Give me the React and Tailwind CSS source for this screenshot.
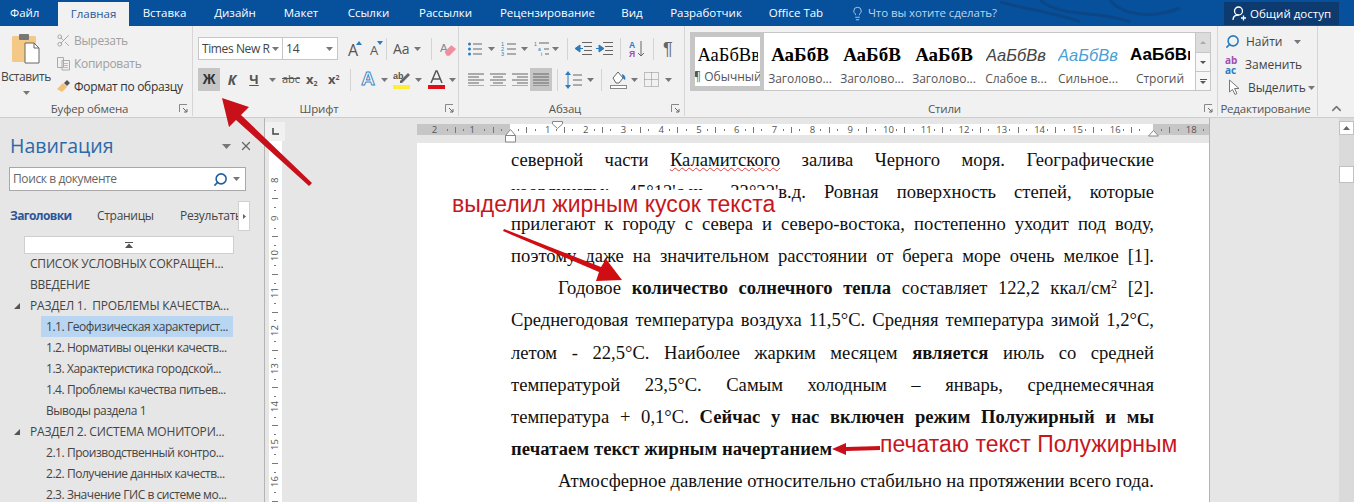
import { Scissors, Search, X, ChevronUp, Lightbulb } from 'lucide-react'

const uiFont = "font-['Open_Sans','Noto_Sans',sans-serif]"

const tabs = [
  { label: 'Вставка', w: 'w-[71px]' },
  { label: 'Дизайн', w: 'w-[70px]' },
  { label: 'Макет', w: 'w-[62px]' },
  { label: 'Ссылки', w: 'w-[73px]' },
  { label: 'Рассылки', w: 'w-[81px]' },
  { label: 'Рецензирование', w: 'w-[123px]' },
  { label: 'Вид', w: 'w-[46px]' },
  { label: 'Разработчик', w: 'w-[102px]' },
  { label: 'Office Tab', w: 'w-[78px]' },
]

const styles = [
  { sample: 'АаБбВвГг', label: '¶ Обычный', cls: "font-['Liberation_Serif',serif] text-[18.500px] text-black max-w-[60px]", selected: true },
  { sample: 'АаБбВ', label: 'Заголово...', cls: "font-['Liberation_Serif',serif] text-[19px] font-bold text-black" },
  { sample: 'АаБбВ', label: 'Заголово...', cls: "font-['Liberation_Serif',serif] text-[19px] font-bold text-black" },
  { sample: 'АаБбВ', label: 'Заголово...', cls: "font-['Liberation_Serif',serif] text-[19px] font-bold text-black" },
  { sample: 'АаБбВв', label: 'Слабое в...', cls: "font-['Liberation_Sans',sans-serif] text-[16.500px] italic text-[#444]" },
  { sample: 'АаБбВв', label: 'Сильное...', cls: "font-['Liberation_Sans',sans-serif] text-[16.500px] italic text-[#4a9fd6]" },
  { sample: 'АаБбВвГ', label: 'Строгий', cls: "font-['Liberation_Sans',sans-serif] text-[17px] font-bold text-black max-w-[60px]" },
]

const navItems = [
  { text: 'СПИСОК УСЛОВНЫХ СОКРАЩЕН...', level: 1 },
  { text: 'ВВЕДЕНИЕ', level: 1 },
  { text: 'РАЗДЕЛ 1.  ПРОБЛЕМЫ КАЧЕСТВА...', level: 1, open: true },
  { text: '1.1. Геофизическая характерист...', level: 2, active: true },
  { text: '1.2. Нормативы оценки качеств...', level: 2 },
  { text: '1.3. Характеристика городской...', level: 2 },
  { text: '1.4. Проблемы качества питьев...', level: 2 },
  { text: 'Выводы раздела 1', level: 2 },
  { text: 'РАЗДЕЛ 2. СИСТЕМА МОНИТОРИ...', level: 1, open: true },
  { text: '2.1. Производственный контро...', level: 2 },
  { text: '2.2. Получение данных качеств...', level: 2 },
  { text: '2.3. Значение ГИС в системе мо...', level: 2 },
]

function Caret({ className = '' }) {
  return (
    <svg width="7" height="4" viewBox="0 0 7 4" className={`shrink-0 ${className}`}>
      <path d="M0 0h7L3.5 4z" fill="#777" />
    </svg>
  )
}

function Sep({ className = '' }) {
  return <i className={`block w-px h-[22px] bg-[#d4d4d4] shrink-0 ${className}`} />
}

function Launcher() {
  return (
    <svg width="9" height="9" viewBox="0 0 9 9" className="shrink-0">
      <path d="M.5 8V.5H8" fill="none" stroke="#888" />
      <path d="M4 4l4 4M8 5v3H5" fill="none" stroke="#666" />
    </svg>
  )
}

function Lines({ rows }) {
  return (
    <svg width="16" height="13" viewBox="0 0 16 13" className="shrink-0">
      {rows.map((r, i) => (
        <rect key={i} x={r[0]} y={i * 3 + 0.5} width={r[1]} height="1" fill="#666" />
      ))}
    </svg>
  )
}

function Group({ width, label, launcher, children }) {
  return (
    <div className={`${width} shrink-0 flex flex-col border-r border-[#d6d6d6] mb-[1px]`}>
      <div className="flex-1 min-h-0">{children}</div>
      <div className="h-[15px] flex items-center pr-[4px]">
        <span className="flex-1 text-center text-[11.500px] tracking-[-0.2px] text-[#555] whitespace-nowrap">{label}</span>
        {launcher && <Launcher />}
      </div>
    </div>
  )
}

function ClipboardGroup() {
  return (
    <Group width="w-[193px]" label="Буфер обмена" launcher>
      <div className="flex pt-[3px]">
        <div className="w-[52px] flex flex-col items-center shrink-0">
          <svg width="32" height="32" viewBox="0 0 32 32" className="mt-[4px]">
            <rect x="2" y="3" width="24" height="26" rx="1.5" fill="#f4c988" />
            <rect x="9" y="1" width="10" height="6" rx="1" fill="#777" />
            <path d="M15 10h9l5 5v15H15z" fill="#fff" stroke="#666" />
            <path d="M24 10v5h5" fill="none" stroke="#666" />
          </svg>
          <span className="text-[12px] tracking-[-0.4px] leading-[14px] mt-[5px] text-[#444]">Вставить</span>
          <Caret className="mt-[7px]" />
        </div>
        <div className="flex flex-col pl-[4px] text-[12px] tracking-[-0.3px] leading-[23px]">
          <div className="flex items-center gap-[3px] text-[#a0a0a0]">
            <Scissors size={15} strokeWidth={1.6} className="text-[#a8a8a8]" />
            <span>Вырезать</span>
          </div>
          <div className="flex items-center gap-[3px] text-[#a0a0a0]">
            <svg width="15" height="15" viewBox="0 0 15 15">
              <path d="M1.5 1.5h6v10h-6zM6 4.500h7.500v9.500H6z" fill="#f1f1f1" stroke="#aaa" />
              <path d="M8 7.500h4M8 9.500h4M8 11.500h4" stroke="#bbb" />
            </svg>
            <span>Копировать</span>
          </div>
          <div className="flex items-center gap-[3px] text-[#333]">
            <svg width="15" height="15" viewBox="0 0 15 15">
              <path d="M1 10l6-6 4 4-5 5z" fill="#f2c079" />
              <path d="M8 4l3-3 3 3-3 3z" fill="#555" />
            </svg>
            <span>Формат по образцу</span>
          </div>
        </div>
      </div>
    </Group>
  )
}

function GrowA({ up, size }) {
  return (
    <span className="relative w-[18px] h-[20px] flex items-end justify-center shrink-0">
      <span className={`${size} leading-[18px] text-[#555]`}>A</span>
      <svg width="6" height="4" viewBox="0 0 6 4" className="absolute right-0 top-[2px]">
        <path d={up ? 'M0 4h6L3 0z' : 'M0 0h6L3 4z'} fill="#2b7cbf" />
      </svg>
    </span>
  )
}

function FontGroup() {
  return (
    <Group width="w-[266px]" label="Шрифт" launcher>
      <div className="pl-[5px] pt-[11px]">
        <div className="flex items-center h-[23px]">
          <div className="w-[140px] h-[23px] flex bg-white border border-[#c6c6c6] text-[12px] text-[#444] shrink-0">
            <div className="w-[84px] flex items-center justify-between pl-[3px] pr-[3px] border-r border-[#c6c6c6]">
              <span className="whitespace-nowrap tracking-[-0.4px]">Times New R</span>
              <Caret />
            </div>
            <div className="flex-1 flex items-center justify-between px-[3px] pr-[4px]">
              <span>14</span>
              <Caret />
            </div>
          </div>
          <span className="ml-[6px] flex gap-[3px]">
            <GrowA up size="text-[16px]" />
            <GrowA size="text-[13px]" />
          </span>
          <Sep className="ml-[3px]" />
          <span className="ml-[6px] text-[14px] text-[#555] w-[20px]">Aa</span>
          <Caret className="ml-[2px]" />
          <Sep className="ml-[10px]" />
          <svg width="20" height="18" viewBox="0 0 20 18" className="ml-[7px]">
            <text x="1" y="12" fontSize="12" fill="#888" fontFamily="Liberation Sans">A</text>
            <path d="M6 12l7-7 5 4-7 7H8z" fill="#ee8f9c" />
          </svg>
        </div>
        <div className="flex items-center h-[23px] mt-[8px] text-[13px] text-[#555] font-bold">
          <span className="w-[22px] h-[23px] bg-[#c6c6c6] flex items-center justify-center text-[#333] font-['Liberation_Sans',sans-serif] text-[14px]">Ж</span>
          <span className="w-[20px] text-center italic ml-[2px] text-[14px]">К</span>
          <span className="w-[18px] text-center underline ml-[3px]">Ч</span>
          <Caret className="ml-[6px]" />
          <span className="ml-[6px] w-[18px] text-[11px] font-normal line-through">abc</span>
          <span className="ml-[6px] w-[14px] whitespace-nowrap">x<sub className="text-[7px]">2</sub></span>
          <span className="ml-[8px] w-[14px] whitespace-nowrap">x<sup className="text-[7px]">2</sup></span>
          <Sep className="ml-[8px]" />
          <span className="ml-[8px] w-[18px] text-[19px] text-center text-white [-webkit-text-stroke:1px_#3f86c4] font-['Liberation_Sans',sans-serif]">A</span>
          <Caret className="ml-[4px]" />
          <svg width="18" height="19" viewBox="0 0 18 19" className="ml-[5px]">
            <text x="0" y="9" fontSize="9" fill="#555" fontFamily="Liberation Sans">ab</text>
            <path d="M7 11l8-8 2 2-8 8H7z" fill="#666" />
            <rect x="0" y="15" width="17" height="4" fill="#ffee33" />
          </svg>
          <Caret className="ml-[4px]" />
          <svg width="17" height="19" viewBox="0 0 17 19" className="ml-[6px]">
            <path d="M3 13L8 1h1l5 12M5 9h7" fill="none" stroke="#555" strokeWidth="1.500" />
            <rect x="0" y="15" width="17" height="4" fill="#e0101a" />
          </svg>
          <Caret className="ml-[4px]" />
        </div>
      </div>
    </Group>
  )
}

function ParagraphGroup() {
  return (
    <Group width="w-[226px]" label="Абзац" launcher>
      <div className="pl-[9px] pt-[11px]">
        <div className="flex items-center h-[23px]">
          <svg width="14" height="14" viewBox="0 0 14 14">
            <circle cx="1.500" cy="2" r="1.500" fill="#2b7cbf" />
            <circle cx="1.500" cy="7" r="1.500" fill="#2b7cbf" />
            <circle cx="1.500" cy="12" r="1.500" fill="#2b7cbf" />
            <path d="M5 2h9M5 7h9M5 12h9" stroke="#666" />
          </svg>
          <Caret className="ml-[6px]" />
          <svg width="15" height="15" viewBox="0 0 15 15" className="ml-[6px]">
            <text x="0" y="5" fontSize="5.500" fill="#2b7cbf" fontFamily="Liberation Sans">1</text>
            <text x="0" y="10" fontSize="5.500" fill="#2b7cbf" fontFamily="Liberation Sans">2</text>
            <text x="0" y="15" fontSize="5.500" fill="#2b7cbf" fontFamily="Liberation Sans">3</text>
            <path d="M6 3h9M6 8h9M6 13h9" stroke="#666" />
          </svg>
          <Caret className="ml-[5px]" />
          <svg width="16" height="15" viewBox="0 0 16 15" className="ml-[6px]">
            <text x="0" y="5" fontSize="5" fill="#2b7cbf" fontFamily="Liberation Sans">1</text>
            <text x="4" y="10" fontSize="5" fill="#2b7cbf" fontFamily="Liberation Sans">a</text>
            <text x="7" y="15" fontSize="5" fill="#666" fontFamily="Liberation Sans">i</text>
            <path d="M5 2h10M10 8h5M11 13h4" stroke="#666" />
          </svg>
          <Caret className="ml-[2px]" />
          <Sep className="ml-[8px]" />
          <svg width="17" height="13" viewBox="0 0 17 13" className="ml-[7px]">
            <path d="M7 .5h10M9 4.500h8M9 8.500h8M7 12.500h10" stroke="#666" />
            <path d="M0 6.500L5 3v7zM4 6.500h4" fill="#2b7cbf" stroke="#2b7cbf" />
          </svg>
          <svg width="17" height="13" viewBox="0 0 17 13" className="ml-[4px]">
            <path d="M7 .5h10M9 4.500h8M9 8.500h8M7 12.500h10" stroke="#666" />
            <path d="M8 6.500L3 3v7zM0 6.500h4" fill="#2b7cbf" stroke="#2b7cbf" />
          </svg>
          <Sep className="ml-[7px]" />
          <svg width="16" height="18" viewBox="0 0 16 18" className="ml-[8px]">
            <text x="0" y="8" fontSize="8.500" fontWeight="bold" fill="#2b7cbf" fontFamily="Liberation Sans">А</text>
            <text x="0" y="17" fontSize="8.500" fontWeight="bold" fill="#a24fb0" fontFamily="Liberation Sans">Я</text>
            <path d="M12 1v15M9 13l3 3 3-3" fill="none" stroke="#666" />
          </svg>
          <Sep className="ml-[8px]" />
          <span className="ml-[9px] text-[18px] leading-[20px] text-[#666] font-['Liberation_Sans',sans-serif]">¶</span>
        </div>
        <div className="flex items-center h-[23px] mt-[8px]">
          <Lines rows={[[0, 16], [0, 11], [0, 16], [0, 11], [0, 16]]} />
          <span className="ml-[6px]"><Lines rows={[[0, 16], [3, 10], [0, 16], [3, 10], [0, 16]]} /></span>
          <span className="ml-[6px]"><Lines rows={[[0, 16], [5, 11], [0, 16], [5, 11], [0, 16]]} /></span>
          <span className="ml-[2px] w-[22px] h-[23px] bg-[#c6c6c6] flex items-center justify-center">
            <Lines rows={[[0, 16], [0, 16], [0, 16], [0, 16], [0, 16]]} />
          </span>
          <Sep className="ml-[5px]" />
          <svg width="17" height="18" viewBox="0 0 17 18" className="ml-[7px]">
            <path d="M3 2v14" stroke="#2b7cbf" />
            <path d="M0 4l3-4 3 4zM0 14l3 4 3-4z" fill="#2b7cbf" />
            <path d="M8 4h9M8 9h9M8 14h9" stroke="#666" />
          </svg>
          <Caret className="ml-[5px]" />
          <Sep className="ml-[7px]" />
          <svg width="17" height="19" viewBox="0 0 17 19" className="ml-[8px]">
            <path d="M3 8l5-6 5 6-4 5H6z" fill="#fff" stroke="#666" />
            <path d="M12 4c3 1 4 4 3 6-2-1-3-3-3-6z" fill="#2b7cbf" />
            <rect x="0.500" y="15.500" width="16" height="3" fill="#fff" stroke="#888" />
          </svg>
          <Caret className="ml-[4px]" />
          <svg width="15" height="15" viewBox="0 0 15 15" className="ml-[6px]">
            <path d="M.5.5h14v14H.5zM7.500.5v14M.5 7.500h14" fill="none" stroke="#888" strokeDasharray="1 1" />
          </svg>
          <Caret className="ml-[6px]" />
        </div>
      </div>
    </Group>
  )
}

function StylesGroup() {
  return (
    <Group width="w-[533px]" label="Стили" launcher>
      <div className="flex pl-[5px] pt-[6px] pr-[6px]">
        <div className="w-[506px] h-[59px] flex bg-white border border-[#c6c6c6] overflow-hidden">
          {styles.map((s, i) => (
            <div
              key={i}
              className={`shrink-0 flex flex-col items-center overflow-hidden px-[1px] ${s.selected ? 'border-[4px] border-[#c6c6c6] w-[73px] pt-[3px]' : 'w-[72px] pt-[7px]'}`}
            >
              <span className={`h-[30px] leading-[30px] whitespace-nowrap overflow-hidden ${s.cls}`}>{s.sample}</span>
              <span className="text-[12px] leading-[18px] text-[#555] whitespace-nowrap">{s.label}</span>
            </div>
          ))}
        </div>
        <div className="w-[15px] flex flex-col border-y border-r border-[#c6c6c6]">
          <div className="h-[20px] bg-[#dcdcdc] flex items-center justify-center border-b border-[#c6c6c6]">
            <svg width="6" height="3" viewBox="0 0 6 3"><path d="M0 3h6L3 0z" fill="#aaa" /></svg>
          </div>
          <div className="h-[19px] bg-[#f7f7f7] flex items-center justify-center border-b border-[#c6c6c6]">
            <svg width="6" height="3" viewBox="0 0 6 3"><path d="M0 0h6L3 3z" fill="#555" /></svg>
          </div>
          <div className="flex-1 bg-[#f7f7f7] flex flex-col items-center justify-center gap-[1px]">
            <i className="block w-[7px] h-px bg-[#555]" />
            <svg width="6" height="3" viewBox="0 0 6 3"><path d="M0 0h6L3 3z" fill="#555" /></svg>
          </div>
        </div>
      </div>
    </Group>
  )
}

function EditingGroup() {
  return (
    <Group width="w-[100px]" label="Редактирование">
      <div className="pl-[7px] pt-[4px] text-[12px] leading-[23px] text-[#444]">
        <div className="flex items-center gap-[6px]">
          <Search size={15} strokeWidth={2.5} className="text-[#2b7cbf] -scale-x-100" />
          <span>Найти</span>
          <Caret className="ml-[6px]" />
        </div>
        <div className="flex items-center gap-[3px]">
          <span className="w-[17px] h-[20px] flex flex-col text-[10px] leading-[10px] font-bold">
            <span className="text-[#a24fb0]">ab</span>
            <span className="text-[#2b7cbf]">ac</span>
          </span>
          <span>Заменить</span>
        </div>
        <div className="flex items-center gap-[6px]">
          <svg width="15" height="17" viewBox="0 0 15 17" className="ml-[2px]">
            <path d="M2.500 1v12l3-2.500 2.500 5 2-1-2.500-5H12z" fill="#fff" stroke="#777" strokeLinejoin="round" />
          </svg>
          <span>Выделить</span>
          <Caret className="-ml-[4px]" />
        </div>
      </div>
    </Group>
  )
}

function TopBar() {
  return (
    <div className="h-[26px] bg-[#07509c] flex text-[11.500px] text-white shrink-0 relative overflow-hidden">
      <svg className="absolute left-[1000px] top-0" width="220" height="26" viewBox="0 0 220 26">
        <path d="M0 2c30 8 60 12 80 20M110 0c10 14 40 20 70 8M40 0c20 18 60 10 90 22" fill="none" stroke="#0b4787" strokeWidth="3" />
      </svg>
      <div className="w-[58px] pl-[10px] flex items-center">Файл</div>
      <div className="w-[71px] mt-[2px] bg-[#f1f1f1] text-[#2b579a] flex items-center justify-center">Главная</div>
      {tabs.map(t => (
        <div key={t.label} className={`${t.w} flex items-center justify-center shrink-0 whitespace-nowrap`}>{t.label}</div>
      ))}
      <div className="ml-[15px] flex items-center gap-[3px] text-[#bcd4ec] relative">
        <Lightbulb size={15} strokeWidth={1.4} />
        <span className="whitespace-nowrap tracking-[-0.1px]">Что вы хотите сделать?</span>
      </div>
      <div className="ml-auto mr-[15px] mt-[2px] mb-[1px] w-[115px] bg-[#0d3b70] flex items-center justify-center gap-[3px] relative">
        <svg width="15" height="15" viewBox="0 0 15 15">
          <circle cx="6.500" cy="5" r="4" fill="none" stroke="#fff" strokeWidth="1.300" />
          <path d="M1 14c0-3 2-5 5.500-5M9 12h5M11.500 9.500v5" fill="none" stroke="#fff" strokeWidth="1.300" />
        </svg>
        <span className="whitespace-nowrap">Общий доступ</span>
      </div>
    </div>
  )
}

function NavPane() {
  return (
    <div className="w-[265px] shrink-0 border-r border-[#b4b4b4] pt-[16px] text-[12px] text-[#444] overflow-hidden">
      <div className="flex items-center pl-[10px] pr-[11px] h-[24px]">
        <span className="text-[19.500px] text-[#2b6aa8] flex-1">Навигация</span>
        <svg width="9" height="5" viewBox="0 0 9 5" className="mr-[8px]"><path d="M0 0h9L4.500 5z" fill="#777" /></svg>
        <X size={14} strokeWidth={2.2} className="text-[#666]" />
      </div>
      <div className="ml-[9px] mt-[9px] w-[237px] h-[24px] bg-white border border-[#a8a8a8] flex items-center pl-[3px] pr-[5px]">
        <span className="flex-1 text-[#666] tracking-[-0.4px]">Поиск в документе</span>
        <Search size={15} strokeWidth={2.5} className="text-[#1f5f9f] -scale-x-100" />
        <Caret className="ml-[5px]" />
      </div>
      <div className="mt-[10px] h-[30px] flex items-center tracking-[-0.3px]">
        <span className="ml-[10px] w-[87px] shrink-0 font-bold text-[#2b579a] tracking-[-0.6px]">Заголовки</span>
        <span className="w-[83px] shrink-0">Страницы</span>
        <span className="w-[58px] shrink-0 overflow-hidden whitespace-nowrap">Результаты</span>
        <span className="w-[12px] h-[30px] bg-white border border-[#d0d0d0] flex items-center justify-center">
          <svg width="3" height="5" viewBox="0 0 3 5"><path d="M0 0l3 2.500L0 5z" fill="#666" /></svg>
        </span>
      </div>
      <div className="ml-[24px] mt-[5px] w-[210px] h-[18px] bg-white border border-[#cfcfcf] flex items-center justify-center">
        <svg width="8" height="6" viewBox="0 0 8 6"><path d="M0 0h8v1H0zM4 1.500L8 6H0z" fill="#555" /></svg>
      </div>
      <div className="-mt-[1px]">
        {navItems.map(item => (
          <div key={item.text} className="h-[21px] flex items-center whitespace-pre">
            <span className="w-[14px] ml-[14px] shrink-0">
              {item.open && <svg width="6" height="6" viewBox="0 0 6 6"><path d="M6 0v6H0z" fill="#555" /></svg>}
            </span>
            {item.level === 1 ? (
              <span className="ml-[2px] tracking-[-0.2px]">{item.text}</span>
            ) : (
              <span className={`ml-[13px] w-[192px] h-[21px] leading-[21px] pl-[5px] tracking-[-0.45px] ${item.active ? 'bg-[#b8d6f2]' : ''}`}>{item.text}</span>
            )}
          </div>
        ))}
      </div>
    </div>
  )
}

function VerticalRuler() {
  const nums = [8, 9, 10, 11, 12, 13, 14, 15, 16]
  return (
    <div className="w-[20px] shrink-0 flex flex-col items-center pt-[4px]">
      <div className="w-[20px] h-[19px] bg-[#f1f1f1] flex items-center justify-center">
        <svg width="7" height="7" viewBox="0 0 7 7"><path d="M1 0v6h6" fill="none" stroke="#444" strokeWidth="1.500" /></svg>
      </div>
      <div className="w-[13px] flex-1 bg-white flex flex-col items-center pt-[33px] overflow-hidden text-[9.500px] text-[#555]">
        {nums.map(n => (
          <div key={n} className="h-[37.8px] shrink-0 flex flex-col items-center">
            <span className="[writing-mode:vertical-rl] rotate-180 leading-[10px] h-[12px] flex items-center justify-center">{n}</span>
            <div className="flex-1 flex flex-col items-center justify-around w-full">
              <i className="block w-[2px] h-px bg-[#777]" />
              <i className="block w-[6px] h-px bg-[#777]" />
              <i className="block w-[2px] h-px bg-[#777]" />
            </div>
          </div>
        ))}
      </div>
    </div>
  )
}

function Tick({ n }) {
  return (
    <div className="w-[37.8px] shrink-0 flex items-center justify-between">
      <i className="block w-px h-[2px] bg-[#777] ml-[8px]" />
      <i className="block w-px h-[6px] bg-[#777]" />
      <i className="block w-px h-[2px] bg-[#777]" />
      <span className="w-[10px] -mr-[5px] text-center relative">{n}</span>
    </div>
  )
}

function TickLeft({ n }) {
  return (
    <div className="w-[37.8px] shrink-0 flex items-center justify-between">
      <span className="w-[10px] -ml-[5px] text-center">{n}</span>
      <i className="block w-px h-[2px] bg-[#777]" />
      <i className="block w-px h-[6px] bg-[#777]" />
      <i className="block w-px h-[2px] bg-[#777] mr-[8px]" />
    </div>
  )
}

function HorizontalRuler() {
  const nums = Array.from({ length: 17 }, (_, i) => i + 1)
  return (
    <div className="h-[25px] pt-[6px] shrink-0">
      <div className="h-[11px] flex text-[9.500px] leading-[11px] text-[#555] whitespace-nowrap overflow-hidden">
        <div className="w-[93px] shrink-0 bg-[#c6c6c6] flex justify-end overflow-hidden">
          <TickLeft n="2" />
          <TickLeft n="1" />
        </div>
        <div className="w-[643px] shrink-0 bg-white flex">
          {nums.map(n => <Tick key={n} n={n === 17 ? '' : n} />)}
        </div>
        <div className="flex-1 bg-[#c6c6c6] flex overflow-hidden">
          <Tick n="18" />
          <TickLeft n="" />
        </div>
      </div>
    </div>
  )
}

function Line({ last, indent, children }) {
  return (
    <div className={`${last ? 'text-right' : 'text-justify [text-align-last:justify]'} ${indent ? 'pl-[47px]' : ''}`}>
      {children}
    </div>
  )
}

function Page() {
  return (
    <div className="w-[793px] shrink-0 flex flex-col border-r border-[#b4b4b4]">
      <HorizontalRuler />
      <div className="flex-1 bg-white pl-[94px] pr-[55px] pt-px overflow-hidden font-['Liberation_Serif',serif] text-[18.600px] leading-[32.100px] text-[#111] whitespace-nowrap">
        <Line>
          северной части <span className="underline decoration-wavy decoration-[#e04040] decoration-1">Каламитского</span> залива Черного моря. Географические
        </Line>
        <Line>координаты: 45°12'с.ш., 33°22'в.д. Ровная поверхность степей, которые</Line>
        <Line>прилегают к городу с севера и северо-востока, постепенно уходит под воду,</Line>
        <Line>поэтому даже на значительном расстоянии от берега море очень мелкое [1].</Line>
        <Line indent>
          Годовое <b>количество солнечного тепла</b> составляет 122,2 ккал/см<sup className="text-[12px]">2</sup> [2].
        </Line>
        <Line>Среднегодовая температура воздуха 11,5°С. Средняя температура зимой 1,2°С,</Line>
        <Line>летом - 22,5°С. Наиболее жарким месяцем <b>является</b> июль со средней</Line>
        <Line>температурой 23,5°С. Самым холодным – январь, среднемесячная</Line>
        <Line>температура + 0,1°С. <b>Сейчас у нас включен режим Полужирный и мы</b></Line>
        <div className="font-bold tracking-[0.1px]">печатаем текст жирным начертанием</div>
        <Line indent last>Атмосферное давление относительно стабильно на протяжении всего года.</Line>
      </div>
    </div>
  )
}

function Scrollbar() {
  return (
    <div className="w-[15px] shrink-0 ml-auto bg-[#dadada] flex flex-col pt-[3px]">
      <div className="h-[14px] bg-white border border-[#c0c0c0] flex items-center justify-center">
        <svg width="7" height="4" viewBox="0 0 7 4"><path d="M0 4h7L3.500 0z" fill="#666" /></svg>
      </div>
      <div className="h-[17px] mt-[31px] bg-white border border-[#c0c0c0]" />
    </div>
  )
}

function Annotations() {
  return (
    <>
      <svg className="absolute inset-0 pointer-events-none" width="1354" height="502" viewBox="0 0 1354 502">
        {/* ruler markers */}
        <path d="M510.500 129.500l5 6h-10zM505.500 135.500h10v6.500h-10z" fill="#fff" stroke="#888" />
        <path d="M552.500 121.500h10v2.500l-5 4.500-5-4.500z" fill="#fff" stroke="#888" />
        <path d="M1153.500 130.500l5 5.500h-10z" fill="#fff" stroke="#888" />
        {/* red arrows */}
        <path d="M222 98L249 107 241 115 312 183 309 186 236 120 229 127z" fill="#c8101a" />
        <path d="M503 231L504 229 601 267 606 259 622 280 596 281 599 272z" fill="#d00d12" />
        <path d="M832 449L846 443 846 447 881 446 881 450 846 451 846 455z" fill="#c8101a" />
      </svg>
      <div className="absolute left-[452px] top-[190px] w-[323px] h-[28px] bg-white text-[23px] leading-[28px] text-[#c8171c] font-['Liberation_Sans',sans-serif] whitespace-nowrap">
        выделил жирным кусок текста
      </div>
      <div className="absolute left-[880px] top-[430px] bg-white text-[23px] leading-[28px] text-[#c8171c] font-['Liberation_Sans',sans-serif] whitespace-nowrap">
        печатаю текст Полужирным
      </div>
    </>
  )
}

export default function App() {
  return (
    <div className={`relative w-[1354px] h-[502px] overflow-hidden flex flex-col bg-[#e6e6e6] ${uiFont}`}>
      <TopBar />
      <div className="h-[92px] shrink-0 bg-[#f1f1f1] border-b border-[#cdcdcd] flex text-[#444]">
        <ClipboardGroup />
        <FontGroup />
        <ParagraphGroup />
        <StylesGroup />
        <EditingGroup />
        <div className="flex-1 flex items-end justify-center pb-[1px]">
          <ChevronUp size={15} strokeWidth={2.5} className="text-[#777]" />
        </div>
      </div>
      <div className="flex-1 min-h-0 flex">
        <NavPane />
        <VerticalRuler />
        <div className="w-[132px] shrink-0" />
        <Page />
        <Scrollbar />
      </div>
      <Annotations />
    </div>
  )
}
